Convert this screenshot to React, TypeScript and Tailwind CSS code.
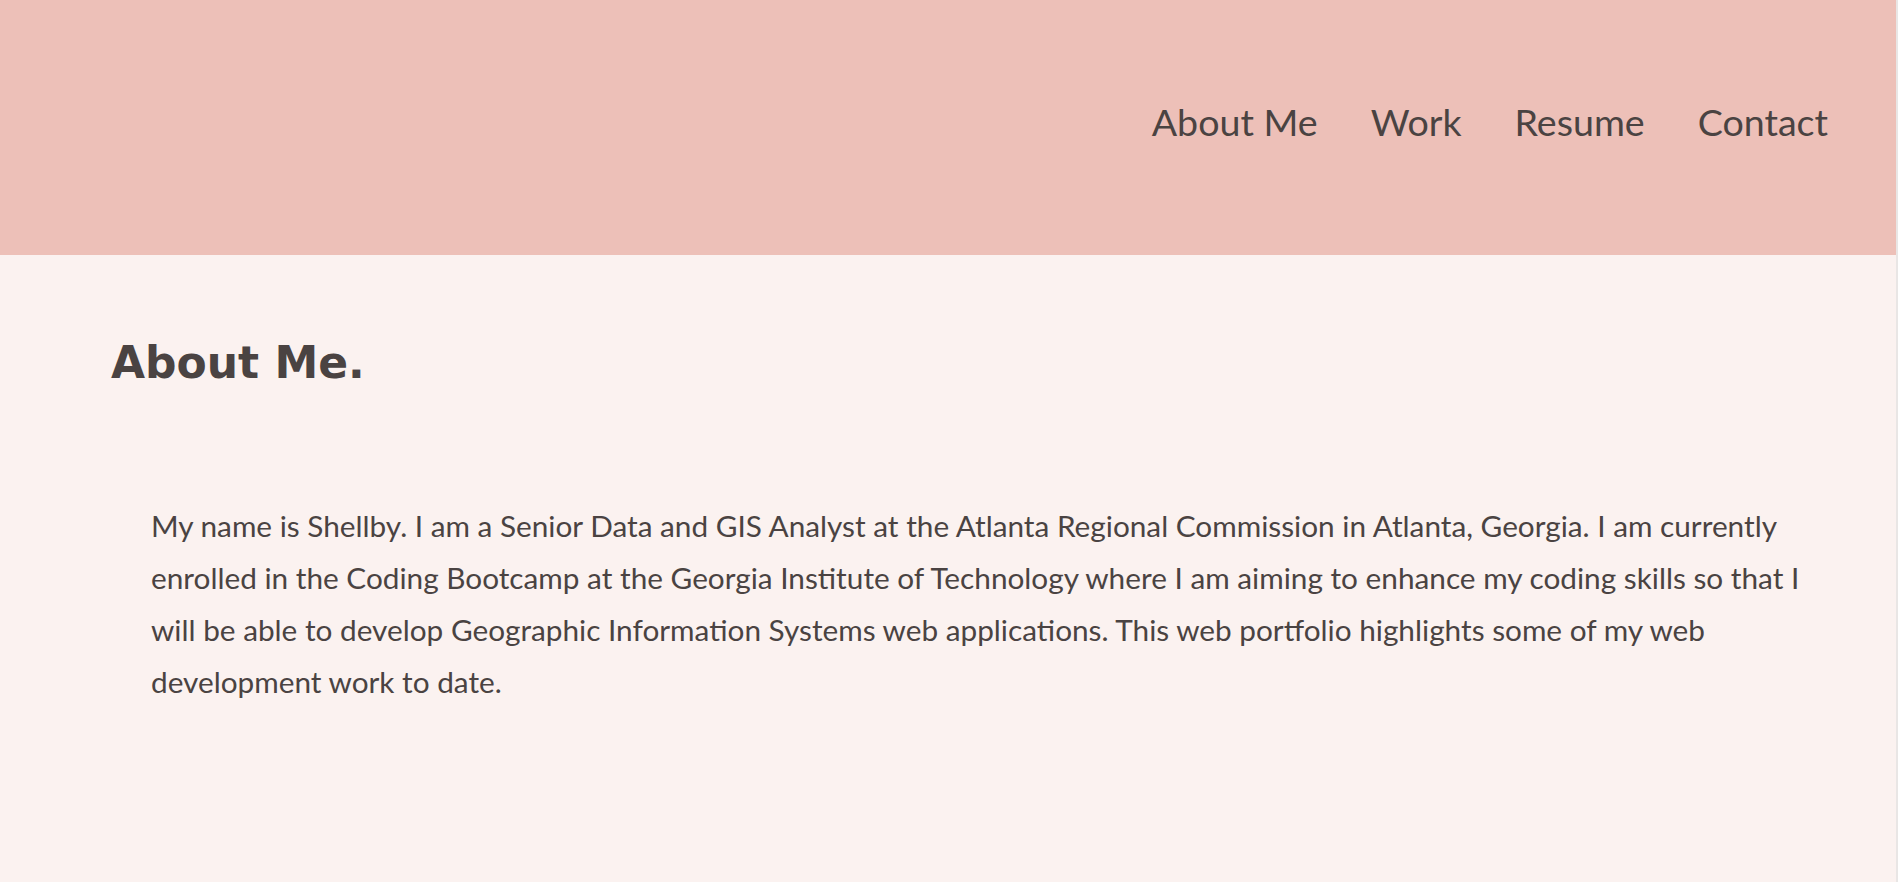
import React from "react";

const lines = [
  "My name is Shellby. I am a Senior Data and GIS Analyst at the Atlanta Regional Commission in Atlanta, Georgia. I am currently",
  "enrolled in the Coding Bootcamp at the Georgia Institute of Technology where I am aiming to enhance my coding skills so that I",
  "will be able to develop Geographic Information Systems web applications. This web portfolio highlights some of my web",
  "development work to date.",
];

export default function App() {
  return (
    <div
      className="flex min-h-screen w-full bg-[#e9e6e5]"
      style={{ fontFamily: "Lato, 'Open Sans', sans-serif" }}
    >
      <div className="flex min-h-[882px] flex-1 flex-col bg-[#fbf2f0] text-[#4a4342]">
        <header className="flex h-[255px] justify-end bg-[#edc0b8] pr-[68px] pt-[103px]">
          <nav className="flex gap-[53px] text-[37.6px] leading-none">
            <a href="#about">About Me</a>
            <a href="#work">Work</a>
            <a href="#resume">Resume</a>
            <a href="#contact">Contact</a>
          </nav>
        </header>
        <main className="flex flex-col">
          <h1 className="pl-[111px] pt-[86px] font-['DejaVu_Sans',sans-serif] text-[44px] font-bold leading-none">
            About Me.
          </h1>
          <p className="mt-[115px] pl-[151px] text-[29.75px] leading-[52px]">
            {lines.map((l, i) => (
              <span key={i} className="block whitespace-nowrap">
                {l}
              </span>
            ))}
          </p>
        </main>
      </div>
      <div className="w-[2px] bg-[#e9e6e5]" />
    </div>
  );
}
